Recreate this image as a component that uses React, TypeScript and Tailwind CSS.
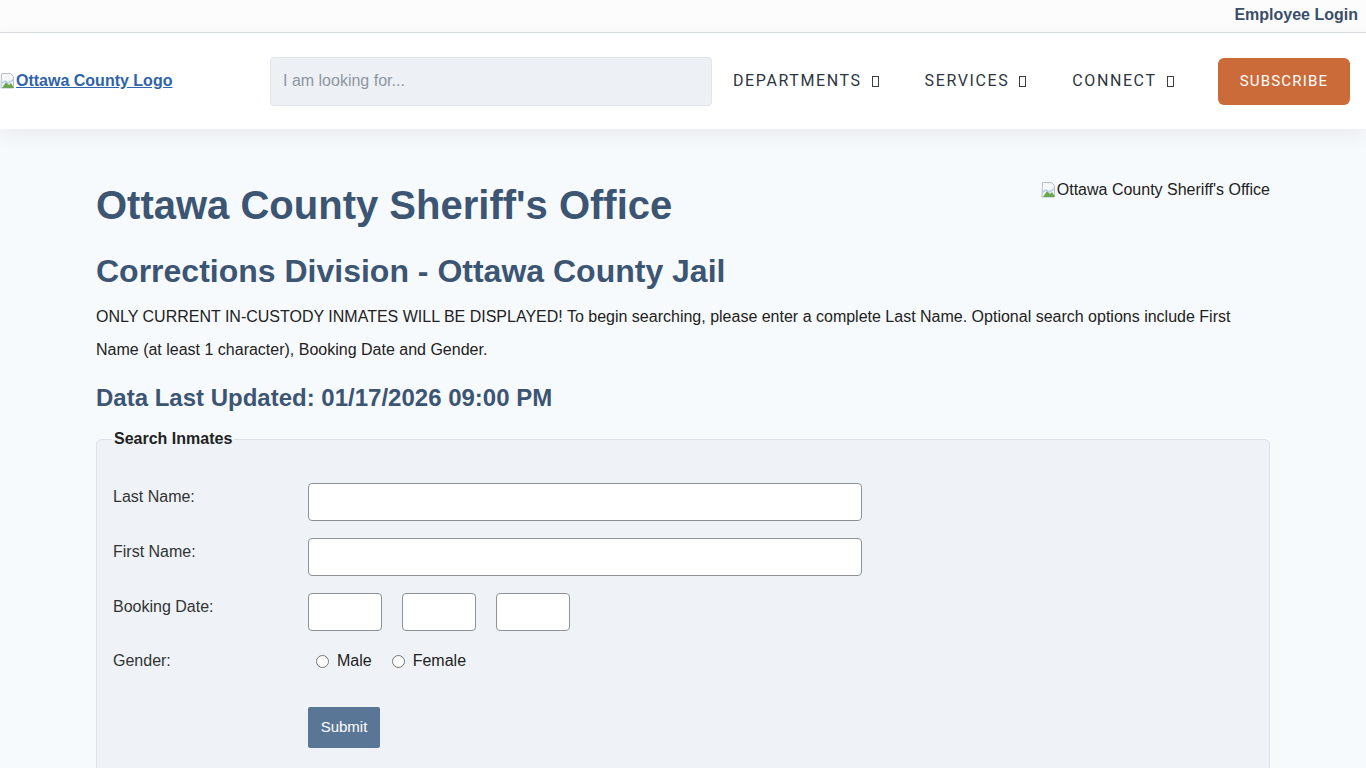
import React from "react";

function BrokenImg() {
  return (
    <svg width="16" height="18" viewBox="0 0 16 18" className="inline-block shrink-0">
      <path d="M1.5 1.5h9l3 3v11.5h-12.5z" fill="#f4f6f8" stroke="#b9c0c8" />
      <path d="M2 16l4-6 3 3 2-2 3 5z" fill="#6aa84f" />
      <path d="M2 10l3-2 3 2 5-3v2l-5 3-3-2-3 2z" fill="#9fc5e8" opacity="0.7" />
    </svg>
  );
}

function NavItem({ label }: { label: string }) {
  return (
    <a className="flex items-center gap-[10px] text-[16px] tracking-[1.6px] text-[#2d3540] font-['Roboto',sans-serif]">
      {label}
      <span className="inline-block w-[7px] h-[11px] border border-[#3a3f46]"></span>
    </a>
  );
}

export default function App() {
  return (
    <div className="min-h-screen bg-[#f7fafc] font-['Liberation_Sans',Arial,sans-serif] text-[#222]">
      {/* top strip */}
      <div className="h-[33px] bg-[#fcfcfd] border-b border-[#d9dde2] flex items-center justify-end pr-[8px] pb-[3px]">
        <a className="text-[16px] font-bold text-[#3b4e68] leading-none">Employee Login</a>
      </div>

      {/* header */}
      <header className="relative h-[96px] bg-white flex items-center shadow-[0_6px_18px_rgba(30,50,80,0.07)]">
        <div className="w-[270px] flex items-center">
          <BrokenImg />
          <a className="text-[16px] font-bold text-[#2f63ab] underline">Ottawa County Logo</a>
        </div>
        <div className="w-[442px] h-[49px] rounded-[4px] bg-[#edf1f5] border border-[#e0e5ea] flex items-center px-[12px]">
          <span className="text-[16px] text-[#8d96a1]">I am looking for...</span>
        </div>
        <nav className="flex items-center ml-[21px] gap-[46px]">
          <NavItem label="DEPARTMENTS" />
          <NavItem label="SERVICES" />
          <NavItem label="CONNECT" />
        </nav>
        <button className="ml-auto mr-[16px] w-[132px] h-[47px] rounded-[6px] bg-[#cc6b3a] text-white text-[15px] tracking-[1.2px] font-['Roboto',sans-serif]">
          SUBSCRIBE
        </button>
      </header>

      {/* main */}
      <main className="w-[1174px] ml-[96px] pt-[52px]">
        <div className="flex items-start justify-between">
          <h1 className="text-[40px] leading-[48px] font-bold text-[#3c5573]">Ottawa County Sheriff's Office</h1>
          <div className="flex items-center mt-[-3px] text-[16px] text-[#222]">
            <BrokenImg />
            <span>Ottawa County Sheriff's Office</span>
          </div>
        </div>
        <h2 className="mt-[22px] text-[32px] leading-[40px] font-bold text-[#3c5573]">
          Corrections Division - Ottawa County Jail
        </h2>
        <p className="mt-[9px] text-[16px] leading-[33px] text-[#222] pr-[30px]">
          ONLY CURRENT IN-CUSTODY INMATES WILL BE DISPLAYED! To begin searching, please enter a complete Last Name. Optional search options include First Name (at least 1 character), Booking Date and Gender.
        </p>
        <h3 className="mt-[17px] text-[24px] leading-[30px] font-bold text-[#3c5573]">
          Data Last Updated: 01/17/2026 09:00 PM
        </h3>

        <fieldset className="mt-[17px] border border-[#dde3ea] rounded-[6px] bg-[#eff3f7] pl-[16px] pt-[35px] pb-[40px]">
          <legend className="ml-[-1px] px-[2px] text-[16px] font-bold text-[#222] leading-[18px]">Search Inmates</legend>
          <div className="grid grid-cols-[195px_1fr] gap-y-[17px]">
            <label className="pt-[2px] text-[16px] text-[#333]">Last Name:</label>
            <input className="w-[554px] h-[38px] rounded-[4px] border border-[#8e9197] bg-white" />

            <label className="pt-[2px] text-[16px] text-[#333]">First Name:</label>
            <input className="w-[554px] h-[38px] rounded-[4px] border border-[#8e9197] bg-white" />

            <label className="pt-[2px] text-[16px] text-[#333]">Booking Date:</label>
            <div className="flex gap-[20px]">
              <input className="w-[74px] h-[38px] rounded-[4px] border border-[#8e9197] bg-white" />
              <input className="w-[74px] h-[38px] rounded-[4px] border border-[#8e9197] bg-white" />
              <input className="w-[74px] h-[38px] rounded-[4px] border border-[#8e9197] bg-white" />
            </div>

            <label className="text-[16px] leading-[26px] text-[#333]">Gender:</label>
            <div className="flex items-center h-[26px] pl-[8px] text-[16px] text-[#222]">
              <span className="w-[13px] h-[13px] rounded-full border border-[#767676] bg-white"></span>
              <span className="ml-[8px]">Male</span>
              <span className="ml-[20px] w-[13px] h-[13px] rounded-full border border-[#767676] bg-white"></span>
              <span className="ml-[8px]">Female</span>
            </div>

            <div></div>
            <div className="pt-[16px]">
              <button className="w-[72px] h-[41px] rounded-[2px] bg-[#5a7697] text-white text-[15px]">Submit</button>
            </div>
          </div>
        </fieldset>
      </main>
    </div>
  );
}
